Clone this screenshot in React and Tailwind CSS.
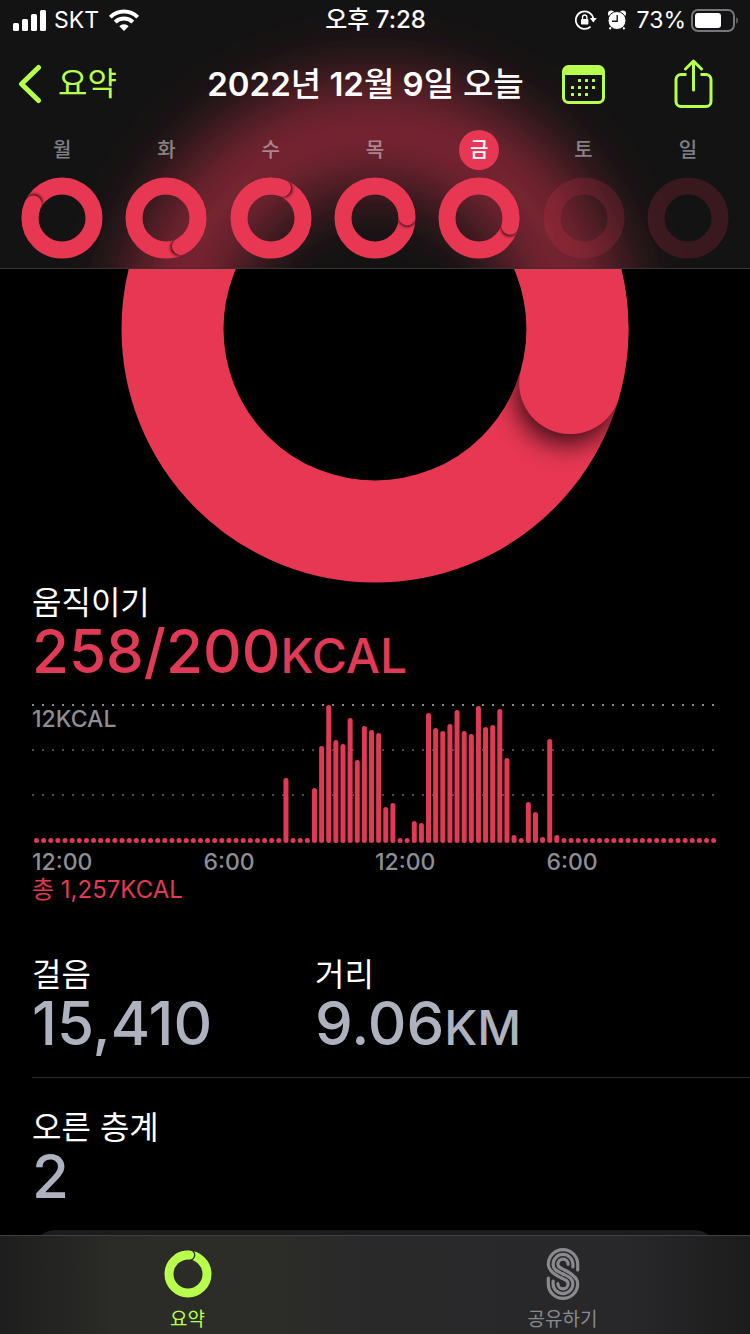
import React from "react";

const FONT = "font-[Inter,'Noto_Sans_CJK_KR',sans-serif]";

const point = (r, deg) => {
  const a = ((deg - 90) * Math.PI) / 180;
  return [r * Math.cos(a), r * Math.sin(a)];
};

// A full ring with the overlapping head of its second lap at `angle` degrees from the top.
function RingShapes({ id, r, width, angle, blur, color = "#e73753" }) {
  const [x, y] = point(r, angle);
  const [sx, sy] = point(r, angle + 3);
  const [bx, by] = point(r, angle - 60);
  return (
    <>
      <defs>
        <mask id={`${id}-mask`} maskUnits="userSpaceOnUse" x={-r * 2} y={-r * 2} width={r * 4} height={r * 4}>
          <circle r={r} fill="none" stroke="#fff" strokeWidth={width} />
        </mask>
        <filter id={`${id}-blur`} x="-50%" y="-50%" width="200%" height="200%">
          <feGaussianBlur stdDeviation={blur} />
        </filter>
      </defs>
      <circle r={r} fill="none" stroke={color} strokeWidth={width} />
      <g mask={`url(#${id}-mask)`}>
        <circle cx={sx} cy={sy} r={width / 2} fill="#000" opacity="0.75" filter={`url(#${id}-blur)`} />
        <path
          d={`M${bx} ${by}A${r} ${r} 0 0 1 ${x} ${y}`}
          fill="none"
          stroke={color}
          strokeWidth={width}
          strokeLinecap="round"
        />
      </g>
    </>
  );
}

const DAYS = [
  { label: "월", angle: 296 },
  { label: "화", angle: 153 },
  { label: "수", angle: 21 },
  { label: "목", angle: 88 },
  { label: "금", angle: 105, today: true },
  { label: "토" },
  { label: "일" },
];

function Day({ label, angle, today, index }) {
  return (
    <button type="button" className="flex flex-col items-center gap-[7px]">
      <span
        className={
          today
            ? "flex size-10 items-center justify-center rounded-full bg-[#e73753] text-xl leading-10 font-medium text-white"
            : "flex size-10 items-center justify-center text-xl leading-10 font-medium text-[#ebebf5]/50"
        }
      >
        {label}
      </span>
      <svg className="size-[82px]" viewBox="-41 -41 82 82" aria-hidden="true">
        {angle === undefined ? (
          <circle r="32" fill="none" stroke="#e73753" strokeOpacity="0.18" strokeWidth="17" />
        ) : (
          <RingShapes id={`day${index}`} r={32} width={17} angle={angle} blur={1.5} />
        )}
      </svg>
    </button>
  );
}

function StatusBar() {
  return (
    <div className="grid h-10 grid-cols-[1fr_auto_1fr] items-center pr-[11px] pl-3 text-[23px] leading-7 text-white">
      <div className="flex items-center gap-2">
        <svg className="h-[21px] w-[34px]" viewBox="0 0 34 21" fill="#fff" aria-hidden="true">
          <rect x="1" y="13" width="6" height="8" rx="1.5" />
          <rect x="10" y="9" width="6" height="12" rx="1.5" />
          <rect x="19" y="4" width="6" height="17" rx="1.5" />
          <rect x="28" y="0" width="6" height="21" rx="1.5" />
        </svg>
        <span>SKT</span>
        <svg className="ml-[2px] h-[22px] w-[30px]" viewBox="0 0 30 22" aria-hidden="true">
          <g fill="none" stroke="#fff" strokeWidth="4">
            <path d="M1.3 8.2a19.4 19.4 0 0 1 27.4 0" />
            <path d="M6.2 13.2a12.5 12.5 0 0 1 17.6 0" />
          </g>
          <path d="M10.3 17.2a6.7 6.7 0 0 1 9.4 0L15 22z" fill="#fff" />
        </svg>
      </div>
      <div className="text-2xl leading-7 font-medium">오후 7:28</div>
      <div className="flex items-center justify-end gap-[5px]">
        <svg className="mr-[5px] h-[20px] w-[22px]" viewBox="0 0 22 20" fill="none" aria-hidden="true">
          <path d="M18.3 8.6A8.8 8.8 0 1 0 15.6 16.6" stroke="#fff" strokeWidth="1.8" />
          <path d="M14.8 8h7l-3.5 4.6z" fill="#fff" />
          <rect x="6" y="9" width="7.4" height="5.6" rx="0.8" fill="#fff" />
          <path d="M7.5 9.5V7.2a2.2 2.2 0 0 1 4.4 0v2.3" stroke="#fff" strokeWidth="1.3" />
        </svg>
        <svg className="mr-[5px] h-[20px] w-[20px]" viewBox="0 0 20 20" fill="none" aria-hidden="true">
          <circle cx="4.2" cy="3.6" r="3.2" fill="#fff" />
          <circle cx="15.8" cy="3.6" r="3.2" fill="#fff" />
          <path d="M4.6 16 2.6 19.2M15.4 16l2 3.2" stroke="#fff" strokeWidth="2" />
          <circle cx="10" cy="10.5" r="9" fill="#fff" stroke="#171516" strokeWidth="1" />
          <path d="M10.2 5v6.2H5" stroke="#1b1517" strokeWidth="1.4" />
        </svg>
        <span>73%</span>
        <svg className="h-[23px] w-[48px]" viewBox="0 0 48 23" aria-hidden="true">
          <rect x="1" y="1" width="42" height="21" rx="6" fill="none" stroke="#77777b" strokeWidth="2" />
          <rect x="4" y="4" width="26" height="15" rx="3" fill="#fff" />
          <path d="M45.3 8.2c2 .9 2 5.7 0 6.6z" fill="#77777b" />
        </svg>
      </div>
    </div>
  );
}

const CALENDAR_DOTS = [
  [17, 15], [24, 15], [31, 15],
  [10, 22], [17, 22], [24, 22], [31, 22],
  [10, 29], [17, 29], [24, 29],
];

function NavBar() {
  return (
    <div className="flex h-[88px] items-center justify-between pr-[37px] pl-[18px]">
      <button type="button" className="flex items-center gap-4 text-[32px] leading-10 text-[#b7ff4c]">
        <svg className="h-[40px] w-6" viewBox="0 0 24 40" fill="none" aria-hidden="true">
          <path d="M20.5 3.5 3.5 20l17 16.5" stroke="#b7ff4c" strokeWidth="5" strokeLinecap="round" strokeLinejoin="round" />
        </svg>
        요약
      </button>
      <h1 className="ml-[52px] text-[33px] leading-10 font-semibold whitespace-nowrap text-white">
        2022<span className="font-medium">년</span> 12<span className="font-medium">월</span> 9
        <span className="font-medium">일 오늘</span>
      </h1>
      <div className="flex items-center gap-[69px]">
        <button type="button" aria-label="달력">
          <svg className="h-[40px] w-[43px]" viewBox="0 -1 43 40" aria-hidden="true">
            <rect x="1.5" y="1.5" width="40" height="36" rx="5" fill="none" stroke="#b7ff4c" strokeWidth="3" />
            <path d="M1.5 10V6.5a5 5 0 0 1 5-5h30a5 5 0 0 1 5 5V10z" fill="#b7ff4c" />
            {CALENDAR_DOTS.map(([x, y]) => (
              <rect key={`${x}-${y}`} x={x - 1} y={y - 1} width="3" height="3" rx="0.5" fill="#b7ff4c" />
            ))}
          </svg>
        </button>
        <button type="button" aria-label="공유">
          <svg className="h-[50px] w-[39px]" viewBox="0 0 39 50" fill="none" stroke="#b7ff4c" strokeWidth="3" strokeLinecap="round" strokeLinejoin="round" aria-hidden="true">
            <path d="M12.5 15.5H7a5 5 0 0 0-5 5v22a5 5 0 0 0 5 5h25a5 5 0 0 0 5-5v-22a5 5 0 0 0-5-5h-5.5" strokeLinecap="butt" />
            <path d="M19.5 31V2.5M11.5 10l8-8 8 8" />
          </svg>
        </button>
      </div>
    </div>
  );
}

function Header() {
  return (
    <header className="relative overflow-hidden border-b border-[#343436] bg-[#131313]">
      <svg className="absolute top-0 left-1/2 h-[268px] w-[750px] -translate-x-1/2" viewBox="0 0 750 268" aria-hidden="true">
        <defs>
          <filter id="glow" filterUnits="userSpaceOnUse" x="-150" y="-150" width="1050" height="950">
            <feGaussianBlur stdDeviation="34" />
          </filter>
        </defs>
        <circle cx="375" cy="329" r="199" fill="none" stroke="#e73753" strokeOpacity="0.51" strokeWidth="102" filter="url(#glow)" />
      </svg>
      <div className="relative">
        <StatusBar />
        <NavBar />
        <div className="grid grid-cols-7 px-[10px] pt-[2px] pb-[9px]">
          {DAYS.map((d, i) => (
            <Day key={d.label} index={i} {...d} />
          ))}
        </div>
      </div>
    </header>
  );
}

const BASE = 5;
const BARS = Array(96).fill(BASE);
Object.entries({
  35: 65, 39: 55, 40: 97, 41: 138, 42: 103, 43: 99, 44: 125, 45: 83, 46: 117, 47: 113, 48: 110,
  49: 36, 50: 40, 53: 22, 54: 20, 55: 130, 56: 115, 57: 112, 58: 119, 59: 133, 60: 112, 61: 109,
  62: 137, 63: 116, 64: 118, 65: 134, 66: 85, 67: 8, 69: 41, 70: 31, 71: 6, 72: 104, 73: 8,
}).forEach(([i, h]) => {
  BARS[i] = h;
});
const TICKS = Array.from({ length: 69 }, (_, i) => i * 10);

function Chart() {
  return (
    <div className="mt-[25px] pr-8">
      <div className="relative">
        <svg className="block w-full" viewBox="0 0 686 140" aria-hidden="true">
          {[0, 45, 90].map((y) =>
            TICKS.map((x) => <rect key={`${x}-${y}`} x={x} y={y} width="2" height="2" fill={y ? "#4a4a4c" : "#88888c"} />)
          )}
          {BARS.map((h, i) => (
            <rect key={i} x={2 + i * 7.128} y={139 - h} width="5" height={h} rx="2.5" fill="#e03a57" />
          ))}
        </svg>
        <span className="absolute top-[1px] left-0 text-[23px] leading-7 font-medium text-[#8e8e93]">12KCAL</span>
      </div>
      <div className="mt-1 grid grid-cols-4 text-[23px] leading-7 font-medium text-[#8e8e93]">
        <span>12:00</span>
        <span>6:00</span>
        <span>12:00</span>
        <span>6:00</span>
      </div>
      <p className="text-2xl leading-7 text-[#e03a57]">총 1,257KCAL</p>
    </div>
  );
}

function Stat({ label, value, unit, className = "text-[#aeb2bf]" }) {
  return (
    <div>
      <h2 className="text-[32px] leading-10 text-white">{label}</h2>
      <p className={`text-[60px] leading-14 font-medium ${className}`}>
        {value}
        {unit && <span className="text-5xl leading-10">{unit}</span>}
      </p>
    </div>
  );
}

function TabBar() {
  return (
    <nav className="grid h-[99px] grid-cols-2 border-t border-[#404042] bg-[linear-gradient(90deg,#1e1e1e_0%,#2b2c27_16%,#2c2d28_36%,#29292a_50%,#28282a_84%,#1c1c1d_100%)] text-[19px] leading-6">
      <a href="#summary" className="flex flex-col items-center pt-[11px] text-[#b7ff4c]">
        <svg className="h-[54px] w-[54px]" viewBox="-27 -27 54 54" fill="none" aria-hidden="true">
          <circle r="19" stroke="#b7ff4c" strokeWidth="9" />
          <circle cx="1.5" cy="-19" r="5.2" stroke="#2c2d28" strokeWidth="1.3" />
          <path d="M-10 -16.15A19 19 0 0 1 1 -18.97" stroke="#b7ff4c" strokeWidth="9" strokeLinecap="round" />
        </svg>
        <span className="mt-[7px]">요약</span>
      </a>
      <a href="#sharing" className="flex flex-col items-center pt-[11px] text-[#8a8a8e]">
        <svg className="h-[54px] w-[54px]" viewBox="-27 -27 54 54" fill="none" stroke="#8a8a8e" strokeWidth="3.2" strokeLinecap="round" aria-hidden="true">
          {[0, 180].map((turn) => (
            <g key={turn} transform={`rotate(${turn})`}>
              <path d="M14.7 -4V-9.7A14.7 14.7 0 0 0 -14.7 -9.7C-14.7 -3 -8 1 -1 4.3C3 6.2 5.1 7 5.1 9.7A5.1 5.1 0 0 1 -5.1 9.7" />
              <path d="M9.9 -7V-9.7A9.9 9.9 0 0 0 -9.9 -9.7C-9.9 -4 -5 -2.5 0 0" />
            </g>
          ))}
        </svg>
        <span className="mt-[7px]">공유하기</span>
      </a>
    </nav>
  );
}

export default function App() {
  return (
    <div className={`flex min-h-screen flex-col bg-black ${FONT}`}>
      <Header />
      <main className="flex flex-1 flex-col overflow-hidden pl-8">
        <svg className="mr-8 block h-[314px] w-[508px] self-center" viewBox="-254 -60 508 314" role="img" aria-label="움직이기 링">
          <RingShapes id="main" r={202.5} width={102} angle={105.5} blur={13} />
        </svg>
        <Stat label="움직이기" value="258/200" unit="KCAL" className="text-[#e03a57]" />
        <Chart />
        <div className="mt-[51px] grid grid-cols-[283px_1fr] border-b border-[#2c2c2e] pb-[26px]">
          <Stat label="걸음" value="15,410" />
          <Stat label="거리" value="9.06" unit="KM" />
        </div>
        <div className="mt-[30px]">
          <Stat label="오른 층계" value="2" />
        </div>
        <div className="mt-auto mr-8 h-[5px] overflow-hidden">
          <div className="h-20 rounded-3xl bg-[#1c1c1e]" />
        </div>
      </main>
      <TabBar />
    </div>
  );
}
